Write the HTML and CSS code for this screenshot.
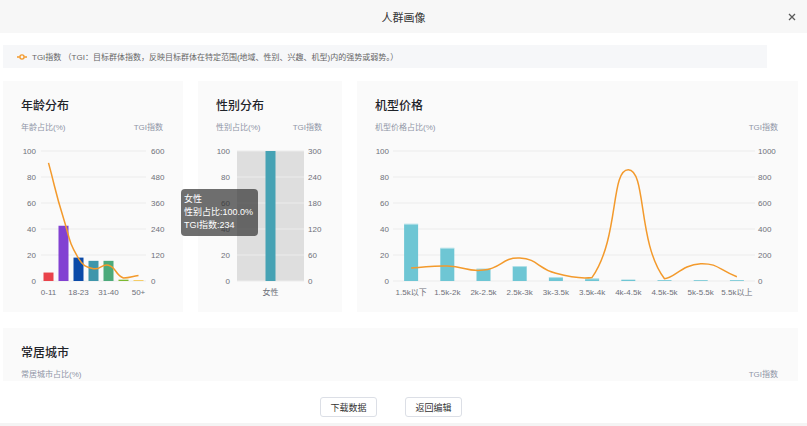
FILE: index.html
```html
<!DOCTYPE html>
<html lang="zh-CN">

<head>
    <meta charset="UTF-8">
    <meta name="viewport" content="width=device-width, initial-scale=1.0">
    <title>人群画像</title>
    <link rel="stylesheet" href="styles.css">
</head>

<body>
    <div class="modal">
        <div class="modal-header">
            <span></span>
            <span class="modal-title">人群画像</span>
            <svg class="modal-close" width="8" height="8" viewBox="0 0 8 8">
                <path d="M1 1L7 7M7 1L1 7" stroke="#5a5a5a" stroke-width="1.3" fill="none" />
            </svg>
        </div>

        <div class="modal-body">
            <div class="tip">
                <svg class="tip-icon" width="10" height="10" viewBox="0 0 10 10">
                    <circle cx="5" cy="5" r="2.1" stroke="#f39a2c" stroke-width="1.4" fill="none" />
                    <path d="M0 5H2.6M7.4 5H10" stroke="#f39a2c" stroke-width="1.4" />
                </svg>
                <span>TGI指数 （TGI：目标群体指数，反映目标群体在特定范围(地域、性别、兴趣、机型)内的强势或弱势。）</span>
            </div>

            <div class="chart-row">
                <div class="card card-age">
                    <div class="card-head">
                        <h3>年龄分布</h3>
                        <div class="axis-names"><span>年龄占比(%)</span><span>TGI指数</span></div>
                    </div>
                    <svg class="chart" id="ageChart" width="180" height="165"></svg>
                </div>

                <div class="card card-gender">
                    <div class="card-head">
                        <h3>性别分布</h3>
                        <div class="axis-names"><span>性别占比(%)</span><span>TGI指数</span></div>
                    </div>
                    <svg class="chart" id="genderChart" width="144" height="165"></svg>
                </div>

                <div class="card card-price">
                    <div class="card-head">
                        <h3>机型价格</h3>
                        <div class="axis-names"><span>机型价格占比(%)</span><span>TGI指数</span></div>
                    </div>
                    <svg class="chart" id="priceChart" width="441" height="165"></svg>
                </div>

                <div class="chart-tooltip">
                    <div>女性</div>
                    <div>性别占比:100.0%</div>
                    <div>TGI指数:234</div>
                </div>
            </div>

            <div class="card card-city">
                <div class="card-head">
                    <h3>常居城市</h3>
                    <div class="axis-names"><span>常居城市占比(%)</span><span>TGI指数</span></div>
                </div>
            </div>
        </div>

        <div class="modal-footer">
            <button type="button">下载数据</button>
            <button type="button">返回编辑</button>
        </div>
    </div>

    <script>
        const NS = 'http://www.w3.org/2000/svg';

        function el(tag, attrs, parent) {
            const node = document.createElementNS(NS, tag);
            for (const k in attrs) node.setAttribute(k, attrs[k]);
            parent.appendChild(node);
            return node;
        }

        // echarts 风格的平滑曲线
        function smoothPath(pts, smooth) {
            const xs = pts.map(p => p[0]), ys = pts.map(p => p[1]);
            const minX = Math.min(...xs), maxX = Math.max(...xs);
            const minY = Math.min(...ys), maxY = Math.max(...ys);
            const clamp = (v, a, b) => Math.max(a, Math.min(b, v));
            const cps = pts.map((p, i) => {
                const prev = pts[i - 1] || p;
                const next = pts[i + 1] || p;
                const vx = (next[0] - prev[0]) * smooth;
                const vy = (next[1] - prev[1]) * smooth;
                let d0 = Math.hypot(p[0] - prev[0], p[1] - prev[1]);
                let d1 = Math.hypot(next[0] - p[0], next[1] - p[1]);
                const sum = d0 + d1;
                if (sum) { d0 /= sum; d1 /= sum; }
                return [
                    [clamp(p[0] - vx * d0, minX, maxX), clamp(p[1] - vy * d0, minY, maxY)],
                    [clamp(p[0] + vx * d1, minX, maxX), clamp(p[1] + vy * d1, minY, maxY)]
                ];
            });
            const f = p => p[0].toFixed(1) + ',' + p[1].toFixed(1);
            let d = 'M' + f(pts[0]);
            for (let i = 0; i < pts.length - 1; i++) {
                d += ' C' + f(cps[i][1]) + ' ' + f(cps[i + 1][0]) + ' ' + f(pts[i + 1]);
            }
            return d;
        }

        function drawChart(id, cfg) {
            const svg = document.getElementById(id);
            const top = 11, bottom = 141, h = bottom - top;
            const step = h / 5;
            const n = cfg.cats.length;
            const catW = (cfg.right - cfg.left) / n;

            if (cfg.band) {
                el('rect', { x: cfg.left, y: top, width: cfg.right - cfg.left, height: h, class: 'band' }, svg);
            }

            for (let k = 0; k <= 5; k++) {
                const y = top + step * k;
                el('line', { x1: cfg.left, x2: cfg.right, y1: y, y2: y, class: 'grid' }, svg);
                el('text', { x: cfg.leftLabelX, y: y + 3, 'text-anchor': 'end' }, svg).textContent = 100 - 20 * k;
                el('text', { x: cfg.rightLabelX, y: y + 3 }, svg).textContent = cfg.rightMax - cfg.rightMax / 5 * k;
            }

            cfg.cats.forEach((name, i) => {
                const cx = cfg.left + catW * (i + 0.5);
                const v = cfg.bars[i];
                const bh = Math.max(h * v / 100, 0.8);
                const color = Array.isArray(cfg.color) ? cfg.color[i] : cfg.color;
                el('rect', { x: cx - cfg.barW / 2, y: bottom - bh, width: cfg.barW, height: bh, fill: color }, svg);
                if (cfg.barTop && bh > 2) {
                    el('rect', { x: cx - cfg.barW / 2, y: bottom - bh, width: cfg.barW, height: 1, class: 'bar-top' }, svg);
                }
                if (!cfg.showLabels || cfg.showLabels.includes(i)) {
                    el('text', { x: cx, y: 154.5, 'text-anchor': 'middle' }, svg).textContent = name;
                }
            });

            if (cfg.line) {
                const pts = cfg.line.map((v, i) => [cfg.left + catW * (i + 0.5), bottom - h * v / cfg.rightMax]);
                el('path', { d: smoothPath(pts, 0.5), class: 'tgi-line' }, svg);
            }
        }

        drawChart('ageChart', {
            left: 38, right: 143, leftLabelX: 33, rightLabelX: 148, rightMax: 600, barW: 10,
            cats: ['0-11', '12-17', '18-23', '24-30', '31-40', '41-49', '50+'],
            bars: [6.5, 42.5, 18, 15.5, 15.5, 1, 0.6],
            color: ['#e9434b', '#8241d2', '#0b4aa8', '#3f96ab', '#4caa7b', '#7cb930', '#f5c344'],
            line: [545, 290, 105, 57, 73, 14, 26],
            showLabels: [0, 2, 4, 6]
        });

        drawChart('genderChart', {
            left: 39, right: 106, leftLabelX: 32, rightLabelX: 110, rightMax: 300, barW: 10,
            cats: ['女性'], bars: [100], color: '#46a2b4', band: true
        });

        drawChart('priceChart', {
            left: 36, right: 398, leftLabelX: 32, rightLabelX: 401, rightMax: 1000, barW: 14, barTop: true,
            cats: ['1.5k以下', '1.5k-2k', '2k-2.5k', '2.5k-3k', '3k-3.5k', '3.5k-4k', '4k-4.5k', '4.5k-5k', '5k-5.5k', '5.5k以上'],
            bars: [44, 25.5, 9.5, 11.5, 3, 2, 1, 0.5, 0.6, 0.6],
            color: '#6ec6d4',
            line: [99, 115, 84, 176, 59, 28, 855, 18, 133, 33]
        });
    </script>
</body>

</html>
```

FILE: styles.css
```css
* {
    margin: 0;
    padding: 0;
    box-sizing: border-box;
}

body {
    font-family: "Liberation Sans", "Noto Sans CJK SC", sans-serif;
    background: #f4f4f4;
    width: 807px;
    height: 426px;
    overflow: hidden;
}

.modal {
    background: white;
    height: 423px;
    display: flex;
    flex-direction: column;
}

.modal-header {
    height: 33px;
    flex-shrink: 0;
    background: #f7f7f7;
    display: grid;
    grid-template-columns: 1fr auto 1fr;
    align-items: center;
}

.modal-title {
    font-size: 11px;
    color: #333;
}

.modal-close {
    justify-self: end;
    margin-right: 11px;
}

.modal-body {
    height: 348px;
    flex-shrink: 0;
    overflow: hidden;
    padding: 12px 9px 0 3px;
}

.tip {
    width: 764px;
    height: 23px;
    background: #f6f7f9;
    display: flex;
    align-items: center;
    padding-left: 14px;
    font-size: 8px;
    color: #666;
    margin-bottom: 13px;
}

.tip-icon {
    margin-right: 5px;
}

.chart-row {
    position: relative;
    display: flex;
    gap: 15px;
    height: 231px;
}

.card {
    background: #fafafa;
}

.card-age {
    width: 180px;
}

.card-gender {
    width: 144px;
}

.card-price {
    width: 441px;
}

.card-city {
    margin-top: 16px;
    height: 100px;
}

.card-head {
    padding: 16px 20px 0 18px;
}

.card h3 {
    font-size: 12px;
    line-height: 18px;
    font-weight: 500;
    color: #1f2329;
}

.axis-names {
    margin-top: 8px;
    display: flex;
    justify-content: space-between;
    font-size: 8px;
    line-height: 10px;
    color: #8f95a6;
}

.chart {
    display: block;
    margin-top: 7px;
}

.chart text {
    font-family: "Liberation Sans", "Noto Sans CJK SC", sans-serif;
    font-size: 8px;
    fill: #6e7079;
}

.chart .grid {
    stroke: #ececec;
    stroke-width: 1;
}

.chart .band {
    fill: #dedede;
}

.chart .bar-top {
    fill: rgba(255, 255, 255, 0.45);
}

.chart .tgi-line {
    fill: none;
    stroke: #f39a2c;
    stroke-width: 1.5;
}

.chart-tooltip {
    position: absolute;
    left: 178px;
    top: 108px;
    width: 77px;
    padding: 4px 3px;
    background: rgba(50, 50, 50, 0.7);
    border-radius: 4px;
    color: white;
    font-size: 9px;
    line-height: 13px;
}

.modal-footer {
    flex: 1;
    display: flex;
    justify-content: center;
    gap: 28px;
    padding: 16px 25px 0 0;
}

.modal-footer button {
    width: 57px;
    height: 20px;
    border: 1px solid #dcdfe6;
    border-radius: 3px;
    background: white;
    font-family: inherit;
    font-size: 9px;
    color: #333;
}
```
